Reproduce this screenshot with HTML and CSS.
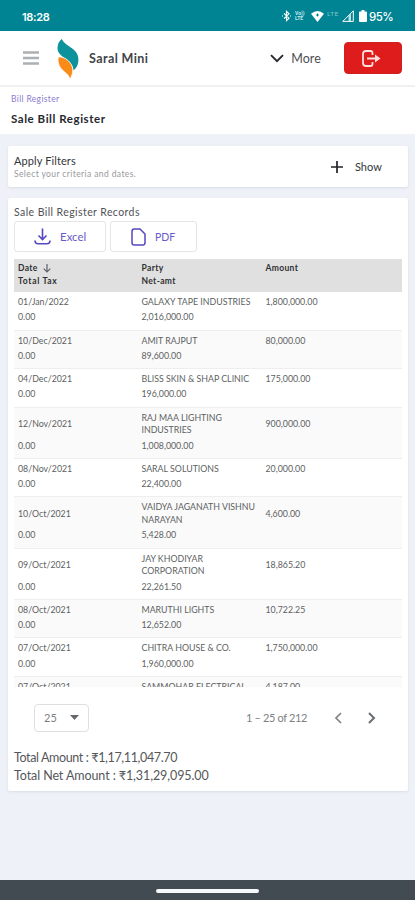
FILE: index.html
```html
<!DOCTYPE html>
<html lang="en">
<head>
<meta charset="utf-8">
<meta name="viewport" content="width=device-width, initial-scale=1">
<title>Sale Bill Register</title>
<link rel="stylesheet" href="styles.css">
</head>
<body>
<div class="status">
  <span class="time">18:28</span>
  <svg class="status-bt" width="9" height="12" viewBox="0 0 9 12"><path d="M2 3.5 7 8.2 4.5 10.7V1.3L7 3.8 2 8.5M0 6h1M8 6h1" fill="none" stroke="#fff" stroke-width="1.1"/></svg>
  <span class="volte"><span>Vo))</span><span>LTE</span></span>
  <svg class="status-wifi" width="13" height="11" viewBox="0 0 13 11"><path d="M0 2.8Q6.5-2.6 13 2.8L6.5 11Z" fill="#fff"/><path d="M5 4h3M6.500 2.500v3" stroke="#008493" fill="none"/></svg>
  <span class="lte">LTE</span>
  <svg class="status-signal" width="12" height="12" viewBox="0 0 12 12"><path d="M.8 11.400 11.300.8V11.400Z" fill="#008493" stroke="#fff"/><path d="M6.500 6 9 3.500V11H6.500Z" fill="#b9e1e2"/></svg>
  <svg class="status-battery" width="8" height="12" viewBox="0 0 8 12"><path d="M2.500 0h3v1.500H7q1 0 1 1V11q0 1-1 1H1q-1 0-1-1V2.500q0-1 1-1h1.500Z" fill="#fff"/></svg>
  <span class="percent">95%</span>
</div>
<header class="topbar">
  <svg class="burger" width="16" height="14" viewBox="0 0 16 14"><path d="M0 1.500h16M0 7h16M0 12.500h16" stroke="#adb0b2" stroke-width="2.400"/></svg>
  <svg class="logo" width="24" height="42" viewBox="0 0 24 42"><path d="M5.500 0C8 4.500 12 6.500 16 9.500c5.500 4 7.300 8.500 6.500 14-.5 4-2.500 7-5 8.500-.2-5-3.500-8.500-9-12.500C3.500 16 .8 13 1.300 8.500 1.600 5 3 2 5.500 0Z" fill="#0b929b"/><path d="M2 18.500c4-.5 8.500 1.500 11.500 5 3.500 4 4 8.500 2.800 12.500-.6 2-1.500 4-2.500 5.500-.4-3.500-2-5-5-7.500C3.500 30 1 25 2 18.500Z" fill="#fa8b18" stroke="#fff" stroke-width=".8"/></svg>
  <span class="brand">Saral Mini</span>
  <svg class="more-icon" width="14" height="9" viewBox="0 0 14 9"><path d="m1 1.200 6 6 6-6" fill="none" stroke="#25272a" stroke-width="1.900"/></svg>
  <span class="more">More</span>
  <button class="logout" aria-label="Log out"><svg width="19" height="17" viewBox="0 0 19 17"><path d="M10.500 5V3Q10.500 1 8.500 1H4Q1 1 1 4v9q0 3 3 3h4.500q2 0 2-2v-2M5 8.500h11" fill="none" stroke="#ffdedc" stroke-width="1.800"/><path d="m13 4.500 5.500 4-5.500 4Z" fill="#ffdedc"/></svg></button>
</header>
<div class="title">
  <a class="crumb">Bill Register</a>
  <h1>Sale Bill Register</h1>
</div>
<main>
  <section class="card filters">
    <div class="filter-copy"><h2 class="filter-title">Apply Filters</h2><p>Select your criteria and dates.</p></div>
    <svg width="12" height="12" viewBox="0 0 12 12"><path d="M6 0v12M0 6h12" stroke="#202329" stroke-width="1.700"/></svg>
    <span class="show">Show</span>
  </section>
  <section class="card records">
    <h2 class="records-title">Sale Bill Register Records</h2>
    <div class="exports">
      <button class="excel"><svg width="17" height="17" viewBox="0 0 17 17"><path d="M8.500.500v10.500M4.500 7.500l4 4 4-4M1 12.500q0 3.300 3 3.300h9q3 0 3-3.300" fill="none" stroke="#5548c0" stroke-width="1.600"/></svg><span>Excel</span></button>
      <button class="pdf"><svg width="15" height="18" viewBox="0 0 15 18"><path d="M3.300 1H9l5 5v8.700q0 2.300-2.300 2.300H3.300Q1 17 1 14.700V3.300Q1 1 3.300 1Z" fill="none" stroke="#5548c0" stroke-width="1.500"/></svg><span>PDF</span></button>
    </div>
    <div class="table">
      <div class="row head"><span>Date <svg width="8" height="9" viewBox="0 0 8 9"><path d="M4 0v8M.700 4.700 4 8l3.300-3.300" fill="none" stroke="#5e6370" stroke-width="1.200"/></svg></span><span>Party</span><span>Amount</span><span class="tax">Total Tax</span><span>Net-amt</span></div>
      <div class="row"><span>01/Jan/2022</span><span>GALAXY TAPE INDUSTRIES</span><span>1,800,000.00</span><span>0.00</span><span>2,016,000.00</span></div>
      <div class="row"><span>10/Dec/2021</span><span>AMIT RAJPUT</span><span>80,000.00</span><span>0.00</span><span>89,600.00</span></div>
      <div class="row"><span>04/Dec/2021</span><span>BLISS SKIN &amp; SHAP CLINIC</span><span>175,000.00</span><span>0.00</span><span>196,000.00</span></div>
      <div class="row"><span>12/Nov/2021</span><span>RAJ MAA LIGHTING<br>INDUSTRIES</span><span>900,000.00</span><span>0.00</span><span>1,008,000.00</span></div>
      <div class="row"><span>08/Nov/2021</span><span>SARAL SOLUTIONS</span><span>20,000.00</span><span>0.00</span><span>22,400.00</span></div>
      <div class="row"><span>10/Oct/2021</span><span>VAIDYA JAGANATH VISHNU<br>NARAYAN</span><span>4,600.00</span><span>0.00</span><span>5,428.00</span></div>
      <div class="row"><span>09/Oct/2021</span><span>JAY KHODIYAR<br>CORPORATION</span><span>18,865.20</span><span>0.00</span><span>22,261.50</span></div>
      <div class="row"><span>08/Oct/2021</span><span>MARUTHI LIGHTS</span><span>10,722.25</span><span>0.00</span><span>12,652.00</span></div>
      <div class="row"><span>07/Oct/2021</span><span>CHITRA HOUSE &amp; CO.</span><span>1,750,000.00</span><span>0.00</span><span>1,960,000.00</span></div>
      <div class="row last"><span>07/Oct/2021</span><span>SAMMOHAR ELECTRICAL</span><span>4,187.00</span></div>
    </div>
    <div class="pager">
      <div class="size"><span>25</span><svg width="9" height="5" viewBox="0 0 9 5"><path d="M0 0h9L4.500 5Z" fill="#66696c"/></svg></div>
      <span class="range">1 – 25 of 212</span>
      <svg class="prev" width="8" height="12" viewBox="0 0 8 12"><path d="M7 1 2 6l5 5" fill="none" stroke="#808386" stroke-width="1.700"/></svg>
      <svg width="8" height="12" viewBox="0 0 8 12"><path d="m1 1 5 5-5 5" fill="none" stroke="#696d71" stroke-width="2"/></svg>
    </div>
    <div class="totals"><p class="total-amount">Total Amount : ₹1,17,11,047.70</p><p class="total-net">Total Net Amount : ₹1,31,29,095.00</p></div>
  </section>
</main>
<footer class="navbar"><div class="handle"></div></footer>
</body>
</html>
```
FILE: styles.css
```css
* { box-sizing: border-box; }
body { margin: 0; height: 900px; overflow: hidden; display: flex; flex-direction: column; background: #eef2f8; font-family: Lato, "Noto Sans", sans-serif; color: #505256; }
h1, h2, p { margin: 0; font-weight: 400; }
button { font-family: inherit; padding: 0; background: #fff; display: flex; align-items: center; }
svg { flex: none; }
span { white-space: nowrap; }
.status { height: 31px; flex: none; background: #008493; color: #fff; display: flex; align-items: center; padding: 1px 0 0 22px; }
.time { width: 260px; font: 600 11px Inter, sans-serif; letter-spacing: -.3px; padding-top: 2px; }
.volte { display: flex; flex-direction: column; font: 700 5px/5px Roboto, sans-serif; width: 12px; margin-left: 4px; color: #c3e8eb; }
.status-wifi { margin-left: 4px; }
.lte { width: 14px; margin: -5px 0 0 3px; font: 6.500px Lato, sans-serif; letter-spacing: .5px; color: #80c4ca; }
.status-signal { margin-left: 1px; }
.status-battery { margin-left: 5px; }
.percent { margin-left: 2px; font: 500 11.500px Inter, sans-serif; padding-top: 2px; letter-spacing: -.6px; }
.topbar { height: 56px; flex: none; background: #fff; border-bottom: 2px solid #f1f1f2; display: flex; align-items: center; padding: 0 13px 0 23px; }
.logo { margin: 0 0 5px 17px; height: 41px; align-self: flex-end; }
.brand { width: 181px; margin-left: 9px; font-size: 12.500px; font-weight: 700; letter-spacing: .4px; color: #414448; }
.more-icon { margin-left: 1px; }
.more { width: 53px; margin-left: 7px; font-size: 12.500px; color: #4e5053; }
.logout { width: 58px; height: 32px; border: 1px solid #cf2020; border-radius: 4px; background: #df1c1c; justify-content: center; padding-right: 4px; }
.title { height: 48px; flex: none; background: #fff; padding: 6px 11px; border-bottom: 1px solid #f1f2f5; }
.crumb { display: block; font-size: 8.500px; line-height: 12px; letter-spacing: .35px; color: #8c7bd0; }
.title h1 { font-size: 11.500px; line-height: 16px; letter-spacing: .55px; margin-top: 6px; font-weight: 700; color: #25282d; }
main { padding: 11px 7px 0 8px; flex: 1; }
.card { background: #fff; border-radius: 2px; box-shadow: 0 1px 3px #8a93a338; }
.filters { height: 41px; display: flex; align-items: center; padding: 0 25px 0 6px; color: #33363b; }
.filter-copy { width: 317px; }
.filter-title { font-size: 11px; line-height: 15px; letter-spacing: .1px; }
.filter-copy p { font-size: 8.500px; line-height: 12px; letter-spacing: .4px; color: #97999c; }
.show { font-size: 11px; margin-left: 12px; }
.records { height: 593px; margin-top: 11px; padding: 7px 6px 0; }
.records-title { font-size: 10.500px; line-height: 15px; letter-spacing: .42px; }
.exports { display: flex; gap: 4px; height: 31px; margin-top: 1px; }
.exports button { border: 1px solid #e5e5ea; border-radius: 3px; color: #6a5cc8; font-size: 11.500px; }
.exports .excel { width: 92px; padding-left: 19px; gap: 9px; }
.exports .pdf { width: 87px; padding-left: 20px; gap: 9px; font-size: 10.500px; }
.table { height: 428px; margin: 6.500px 0 0; overflow: hidden; }
.row { display: grid; grid-template-columns: 123.500px 124px 1fr; row-gap: 2.500px; align-items: center; min-height: 38.500px; padding: 4px 0 5.400px 4px; border-bottom: 1px solid #eee; font-size: 8.800px; line-height: 12.800px; color: #5d5f62; }
.row:nth-child(odd) { background: #fafafa; }
.row.head { min-height: 33.500px; padding: 3px 0 4.500px 4px; row-gap: 0; background: #e0e0e0; border: 0; color: #2e3033; font-weight: 700; font-size: 8.500px; letter-spacing: .35px; }
.head .tax { letter-spacing: .7px; }
.head svg { margin-left: 3px; vertical-align: -2px; }
.row.last { min-height: 0; padding-bottom: 0; border: 0; background: #fafafa; }
.pager { display: flex; align-items: center; height: 28px; margin: 17px 26px 0 20px; color: #7d8083; }
.size { width: 55px; height: 28px; border: 1px solid #dedfe1; border-radius: 4px; display: flex; align-items: center; justify-content: space-between; padding: 0 9px; font-size: 11px; }
.range { margin-left: 157px; width: 88px; font-size: 11px; letter-spacing: -.35px; }
.prev { margin-right: 26px; }
.totals { margin-top: 17px; font-size: 12.500px; line-height: 18px; color: #55575a; white-space: nowrap; }
.total-amount { letter-spacing: -.37px; }
.total-net { letter-spacing: -.09px; }
.navbar { height: 20px; flex: none; background: #434b52; display: flex; justify-content: center; padding-top: 9px; }
.handle { width: 103px; height: 4px; border-radius: 2px; background: #f7f8f9; }
```
